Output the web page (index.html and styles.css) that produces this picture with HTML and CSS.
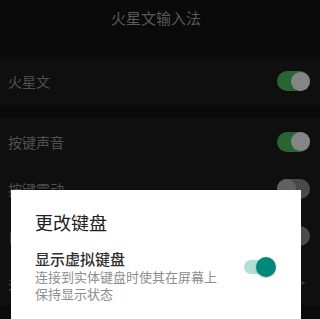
FILE: index.html
```html
<!DOCTYPE html>
<html lang="zh">
<head>
<meta charset="utf-8">
<link rel="stylesheet" href="styles.css">
</head>
<body>
<div class="page">
  <header class="header">火星文输入法</header>
  <section class="group first">
    <div class="row"><span class="label">火星文</span><span class="tg on"><span class="thumb"></span></span></div>
  </section>
  <section class="group">
    <div class="row"><span class="label">按键声音</span><span class="tg on"><span class="thumb"></span></span></div>
    <div class="row"><span class="label">按键震动</span><span class="tg off"><span class="thumb"></span></span></div>
    <div class="row"><span class="label">自动大写</span><span class="tg off"><span class="thumb"></span></span></div>
    <div class="row"><span class="label">关于</span><span class="chev">&gt;</span></div>
  </section>

  <div class="dialog">
    <div class="d-title">更改键盘</div>
    <div class="d-item">
      <div class="d-text">
        <div class="d-name">显示虚拟键盘</div>
        <div class="d-desc">连接到实体键盘时使其在屏幕上保持显示状态</div>
      </div>
      <span class="sw"><span class="sw-track"></span><span class="sw-thumb"></span></span>
    </div>
  </div>
</div>
</body>
</html>
```
FILE: styles.css
```css
html, body {
  margin: 0;
  padding: 0;
  background: #0a0a0a;
  width: 320px;
  height: 319px;
  overflow: hidden;
  font-family: "Noto Sans CJK SC", "Noto Sans", sans-serif;
}
.page {
  position: relative;
  width: 320px;
  height: 319px;
  overflow: hidden;
}
.header {
  height: 57px;
  box-sizing: border-box;
  padding: 8px 8px 0 0;
  text-align: center;
  font-size: 15px;
  line-height: 20px;
  color: #585858;
}
.group {
  background: #0f0f0f;
}
.group.first {
  margin-bottom: 13px;
}
.row {
  height: 47px;
  display: flex;
  align-items: center;
  justify-content: space-between;
  padding: 0 10px 0 8px;
}
.group.first .row {
  height: 48px;
}
.label {
  font-size: 14px;
  color: #505050;
}
.tg {
  position: relative;
  width: 33px;
  height: 20px;
  border-radius: 10px;
}
.tg.on { background: #2a6434; }
.tg.off { background: #4a4a4a; }
.tg .thumb {
  position: absolute;
  top: 0.5px;
  width: 19px;
  height: 19px;
  border-radius: 50%;
}
.tg.on .thumb { right: 0; background: #858585; }
.tg.off .thumb { left: 0; background: #606060; }
.chev {
  color: #404040;
  font-size: 12px;
  font-family: "DejaVu Sans", sans-serif;
  margin-right: 4px;
}
.dialog {
  position: absolute;
  left: 11px;
  top: 190px;
  width: 290px;
  height: 140px;
  box-sizing: border-box;
  background: #ffffff;
  padding: 20px 25px 0 24px;
}
.d-title {
  font-size: 18px;
  line-height: 24px;
  color: #212121;
  margin-bottom: 16px;
}
.d-item {
  display: flex;
  gap: 20px;
}
.d-text {
  flex: 1;
}
.d-name {
  font-size: 15px;
  line-height: 18px;
  color: #303030;
  font-weight: 500;
}
.d-desc {
  font-size: 13px;
  line-height: 17px;
  color: #8e8e8e;
}
.sw {
  position: relative;
  width: 32px;
  height: 20px;
  margin-top: 7px;
  flex: none;
}
.sw-track {
  position: absolute;
  left: 0;
  top: 3px;
  width: 28px;
  height: 14px;
  border-radius: 7px;
  background: #b3dfd9;
}
.sw-thumb {
  position: absolute;
  right: 0;
  top: 0;
  width: 20px;
  height: 20px;
  border-radius: 50%;
  background: #00897b;
  box-shadow: 0 1px 2px rgba(0,0,0,0.25);
}
```
